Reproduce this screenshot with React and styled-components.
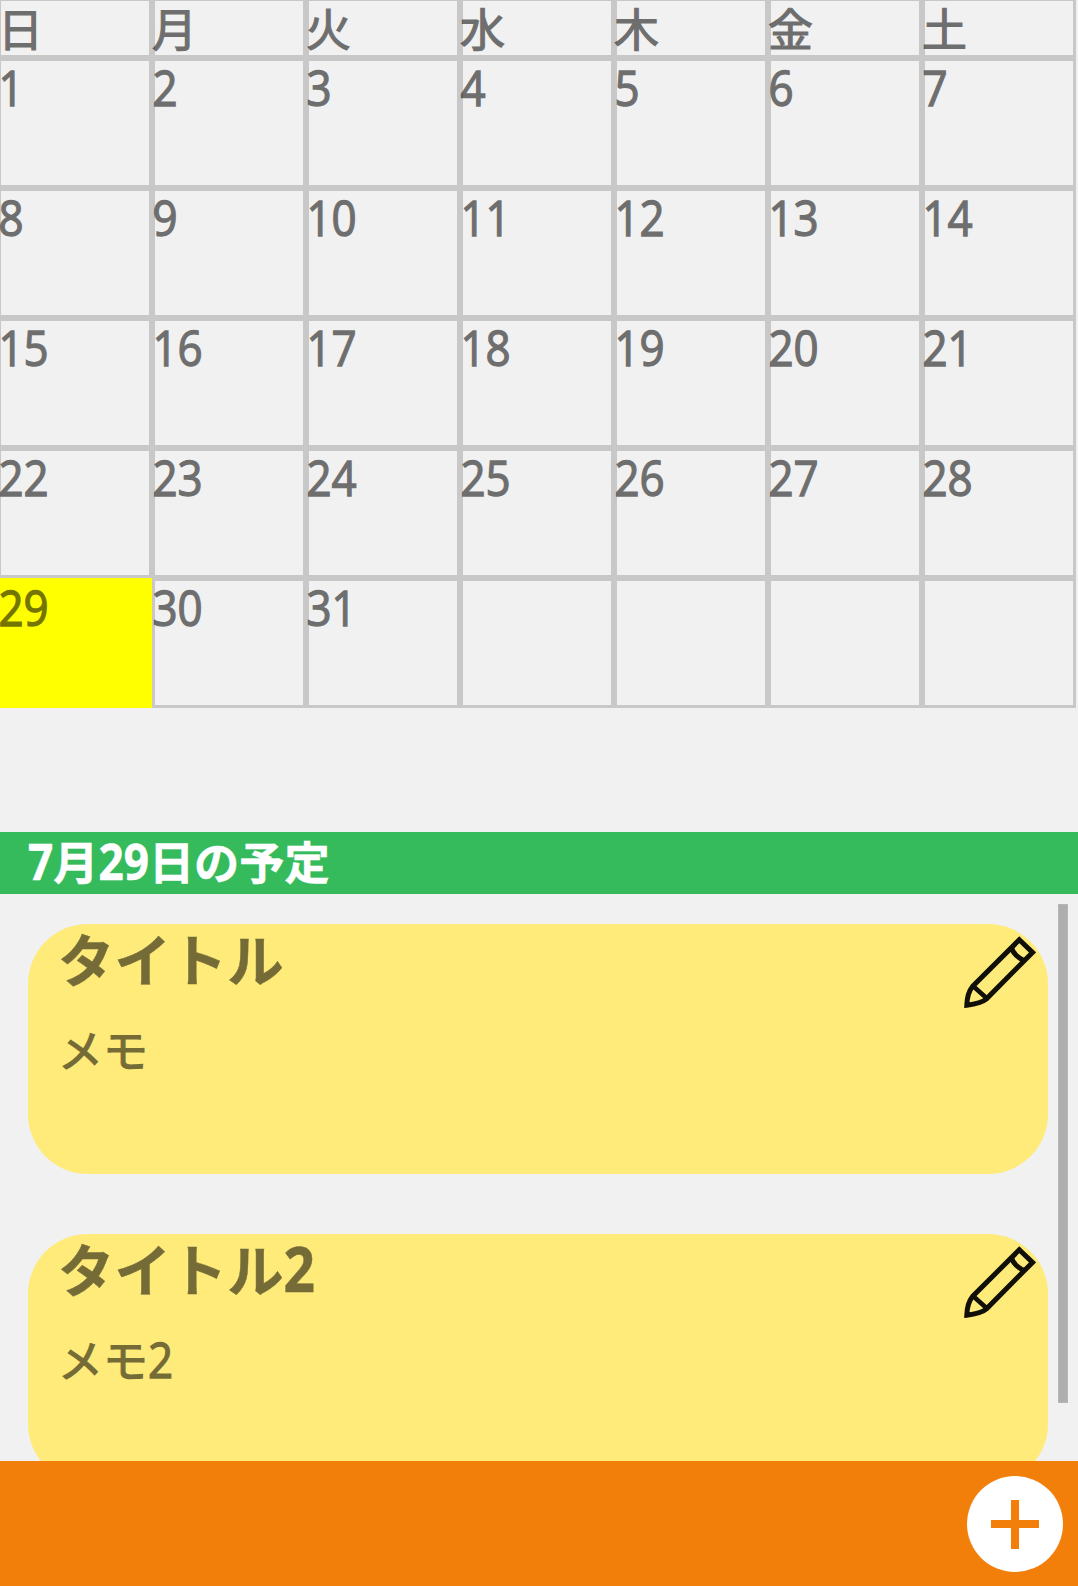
import React from "react";
import styled, { createGlobalStyle } from "styled-components";

const GlobalStyle = createGlobalStyle`
  * { box-sizing: border-box; }
  html, body { margin: 0; padding: 0; background: #f1f1f1; overflow: hidden; }
`;

const Screen = styled.div`
  width: 1078px;
  height: 1586px;
  display: flex;
  flex-direction: column;
  overflow: hidden;
  background: #f1f1f1;
  font-family: "Noto Sans CJK JP", sans-serif;
`;

const Calendar = styled.div`
  display: grid;
  grid-template-columns: repeat(7, 154px);
  grid-template-rows: 60px repeat(5, 130px);
  margin: -2px 0 0 -2px;
  flex: none;
`;

const Cell = styled.div`
  padding-top: ${(p) => (p.$head ? 8 : 2)}px;
  padding-left: ${(p) => (p.$head ? 0 : 0.5)}px;
  font-family: ${(p) => (p.$head ? '"Liberation Sans", ' : "")}"Noto Sans CJK JP", sans-serif;
  box-shadow: ${(p) => (p.$today ? "none" : "inset 0 0 0 3px #c8c8c8")};
  background: ${(p) => (p.$today ? "#ffff00" : "transparent")};
`;

const Label = styled.div`
  font-size: ${(p) => p.$size}px;
  line-height: ${(p) => p.$line}px;
  font-weight: ${(p) => (p.$bold ? 700 : 400)};
  color: ${(p) => (p.$light ? "#ffffff" : "#000000")};
  opacity: ${(p) => (p.$light ? 1 : 0.54)};
  -webkit-text-stroke: ${(p) => (p.$bold ? 0.5 : 1.2)}px currentColor;
  white-space: nowrap;
`;

const Digits = styled.span`
  display: inline-block;
  font-family: "Open Sans", sans-serif;
  font-size: 0.976em;
  line-height: 1;
  transform: scaleY(1.14);
  transform-origin: 0 86%;
`;

const Agenda = styled.section`
  margin-top: 124px;
  display: flex;
  flex-direction: column;
  height: 629px;
  flex: none;
`;

const AgendaTitle = styled.header`
  height: 62px;
  flex: none;
  padding-left: 28px;
  background: #35bb5b;
`;

const Scroller = styled.div`
  display: flex;
  flex: 1;
  min-height: 0;
  overflow: hidden;
`;

const CardList = styled.div`
  width: 1020px;
  margin-left: 28px;
  padding-top: 30px;
  display: flex;
  flex-direction: column;
  gap: 60px;
`;

const Card = styled.article`
  height: 250px;
  flex: none;
  display: flex;
  justify-content: space-between;
  padding: 0 12px 0 30px;
  border-radius: 60px;
  background: #feeb7a;
`;

const CardText = styled.div`
  display: flex;
  flex-direction: column;
  gap: 19px;
`;

const Pencil = styled.svg`
  width: 72px;
  height: 72px;
  margin-top: 12px;
`;

const Thumb = styled.div`
  width: 10px;
  height: 499px;
  margin: 10px 0 0 10px;
  background: #aeaeae;
  border: 1px solid #b6b6b6;
`;

const Footer = styled.footer`
  height: 125px;
  flex: none;
  display: flex;
  justify-content: flex-end;
  padding: 15px 15px 0 0;
  background: #f37f0b;
`;

const AddButton = styled.button`
  width: 96px;
  height: 96px;
  padding: 0;
  border: 0;
  border-radius: 50%;
  background: #ffffff;
  svg { display: block; }
`;

const Mixed = ({ children, ...rest }) => (
  <Label {...rest}>
    {String(children)
      .split(/(\d+)/)
      .filter(Boolean)
      .map((part, i) => (/\d/.test(part) ? <Digits key={i}>{part}</Digits> : part))}
  </Label>
);

const PencilIcon = () => (
  <Pencil viewBox="0 0 72 72" fill="none" stroke="#101008" strokeWidth="5">
    <path d="M55.3 3.8 L68.5 16.4 L22.5 62.8 Q17 67.5 2.8 69.2 Q3.2 57 8.5 50.5 Z" />
    <path d="M47.5 11.5 Q49 19 60 24.5" />
    <path d="M9 50 L23 62.5" strokeWidth="4.5" />
  </Pencil>
);

const weekdays = ["日", "月", "火", "水", "木", "金", "土"];
const days = Array.from({ length: 35 }, (_, i) => (i < 31 ? i + 1 : null));
const plans = [
  { title: "タイトル", memo: "メモ" },
  { title: "タイトル2", memo: "メモ2" },
];

export default function App() {
  return (
    <>
      <GlobalStyle />
      <Screen>
        <Calendar>
          {weekdays.map((d) => (
            <Cell key={d} $head>
              <Label $size={45} $line={52}>{d}</Label>
            </Cell>
          ))}
          {days.map((d, i) => (
            <Cell key={i} $today={d === 29}>
              {d && <Mixed $size={45} $line={54}>{d}</Mixed>}
            </Cell>
          ))}
        </Calendar>
        <Agenda>
          <AgendaTitle>
            <Mixed $size={45.2} $line={58} $bold $light>7月29日の予定</Mixed>
          </AgendaTitle>
          <Scroller>
            <CardList>
              {plans.map((p) => (
                <Card key={p.title}>
                  <CardText>
                    <Mixed $size={56.4} $line={68} $bold>{p.title}</Mixed>
                    <Mixed $size={45} $line={76}>{p.memo}</Mixed>
                  </CardText>
                  <PencilIcon />
                </Card>
              ))}
            </CardList>
            <Thumb />
          </Scroller>
        </Agenda>
        <Footer>
          <AddButton aria-label="追加">
            <svg width="96" height="96" viewBox="0 0 96 96" fill="#f37f0b">
              <path d="M44 24h8v49h-8z M24 44h48v8h-48z" />
            </svg>
          </AddButton>
        </Footer>
      </Screen>
    </>
  );
}
